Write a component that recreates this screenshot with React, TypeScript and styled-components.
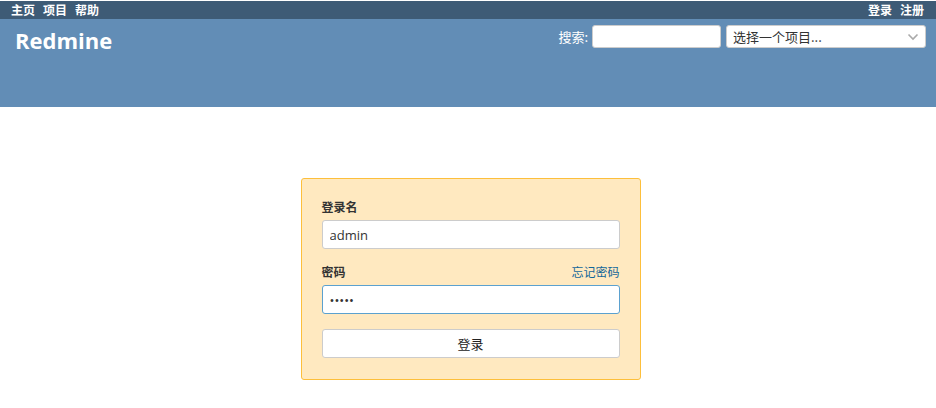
import styled, { createGlobalStyle } from "styled-components";

const GlobalStyle = createGlobalStyle`
  html, body {
    margin: 0;
    padding: 0;
    background: #fff;
    font-family: "Open Sans", "Liberation Sans", "Noto Sans CJK SC", sans-serif;
    font-size: 12px;
    color: #333;
  }
  * { box-sizing: border-box; }
`;

const App = () => {
  return (
    <>
      <GlobalStyle />
      <Page>
        <TopMenu>
          <MenuGroup>
            <MenuLink>主页</MenuLink>
            <MenuLink>项目</MenuLink>
            <MenuLink>帮助</MenuLink>
          </MenuGroup>
          <MenuGroup>
            <MenuLink>登录</MenuLink>
            <MenuLink>注册</MenuLink>
          </MenuGroup>
        </TopMenu>
        <Header>
          <Title>Redmine</Title>
          <QuickSearch>
            <SearchLabel>搜索:</SearchLabel>
            <SearchInput type="text" />
            <ProjectSelect>
              <span>选择一个项目...</span>
              <svg width="12" height="8" viewBox="0 0 12 8">
                <path d="M1.5 1.5 L6 6 L10.5 1.5" fill="none" stroke="#aaa" strokeWidth="1.6" />
              </svg>
            </ProjectSelect>
          </QuickSearch>
        </Header>
        <Main>
          <LoginBox>
            <FieldLabel>登录名</FieldLabel>
            <TextInput type="text" defaultValue="admin" />
            <LabelRow>
              <FieldLabel>密码</FieldLabel>
              <ForgotLink>忘记密码</ForgotLink>
            </LabelRow>
            <TextInput type="password" defaultValue="admin" focused />
            <SubmitButton>登录</SubmitButton>
          </LoginBox>
        </Main>
      </Page>
    </>
  );
};

const Page = styled.div`
  display: flex;
  flex-direction: column;
  padding-top: 1px;
  background: #fff;
`;

const TopMenu = styled.div`
  height: 18px;
  background: #3e5b76;
  display: flex;
  justify-content: space-between;
  align-items: center;
  padding: 0 12px 0 11px;
`;

const MenuGroup = styled.div`
  display: flex;
  gap: 8px;
`;

const MenuLink = styled.a`
  color: #fff;
  font-weight: bold;
  font-size: 12px;
  line-height: 18px;
  font-family: "Noto Sans CJK SC", sans-serif;
`;

const Header = styled.div`
  height: 88px;
  background: #628db6;
  display: flex;
  justify-content: space-between;
  align-items: flex-start;
  padding: 6px 10px 0 15px;
`;

const Title = styled.h1`
  margin: 0;
  color: #fff;
  font-family: "Open Sans", "Liberation Sans", sans-serif;
  font-weight: bold;
  font-size: 22px;
  line-height: 30px;
`;

const QuickSearch = styled.div`
  display: flex;
  align-items: center;
  gap: 5px;
`;

const SearchLabel = styled.span`
  color: #fff;
  font-size: 13px;
  font-family: "Noto Sans CJK SC", sans-serif;
  margin-right: -1px;
`;

const SearchInput = styled.input`
  width: 129px;
  height: 23px;
  border: 1px solid #ccc;
  border-radius: 3px;
  background: #fff;
  padding: 2px 4px;
`;

const ProjectSelect = styled.div`
  width: 200px;
  height: 23px;
  border: 1px solid #ccc;
  border-radius: 3px;
  background: #fff;
  display: flex;
  align-items: center;
  justify-content: space-between;
  padding: 0 6px 0 6px;
  font-size: 13px;
  color: #333;
  font-family: "Noto Sans CJK SC", sans-serif;
`;

const Main = styled.div`
  display: flex;
  justify-content: center;
  padding: 71px 0 30px 0;
`;

const LoginBox = styled.div`
  width: 340px;
  height: 202px;
  margin-left: 5px;
  background: #ffe9c0;
  border: 1px solid #fdbf3b;
  border-radius: 3px;
  padding: 20px 20px 0 20px;
  display: flex;
  flex-direction: column;
`;

const FieldLabel = styled.label`
  font-weight: bold;
  font-size: 12px;
  line-height: 16px;
  color: #333;
  font-family: "Noto Sans CJK SC", sans-serif;
  margin-bottom: 5px;
`;

const LabelRow = styled.div`
  display: flex;
  justify-content: space-between;
  align-items: flex-start;
  margin-top: 15px;
`;

const ForgotLink = styled.a`
  color: #169;
  font-size: 12px;
  line-height: 16px;
  font-family: "Noto Sans CJK SC", sans-serif;
`;

const TextInput = styled.input<{ focused?: boolean }>`
  width: 298px;
  height: 29px;
  border: 1px solid ${(p) => (p.focused ? "#5ba1cf" : "#ccc")};
  border-radius: 3px;
  background: #fff;
  padding: 0 7px;
  font-size: 13px;
  color: #333;
  font-family: "Open Sans", "Liberation Sans", sans-serif;
  outline: none;
`;

const SubmitButton = styled.button`
  width: 298px;
  height: 29px;
  margin-top: 15px;
  border: 1px solid #ccc;
  border-radius: 3px;
  background: #fff;
  font-size: 13px;
  color: #222;
  font-family: "Noto Sans CJK SC", sans-serif;
`;

export default App;
